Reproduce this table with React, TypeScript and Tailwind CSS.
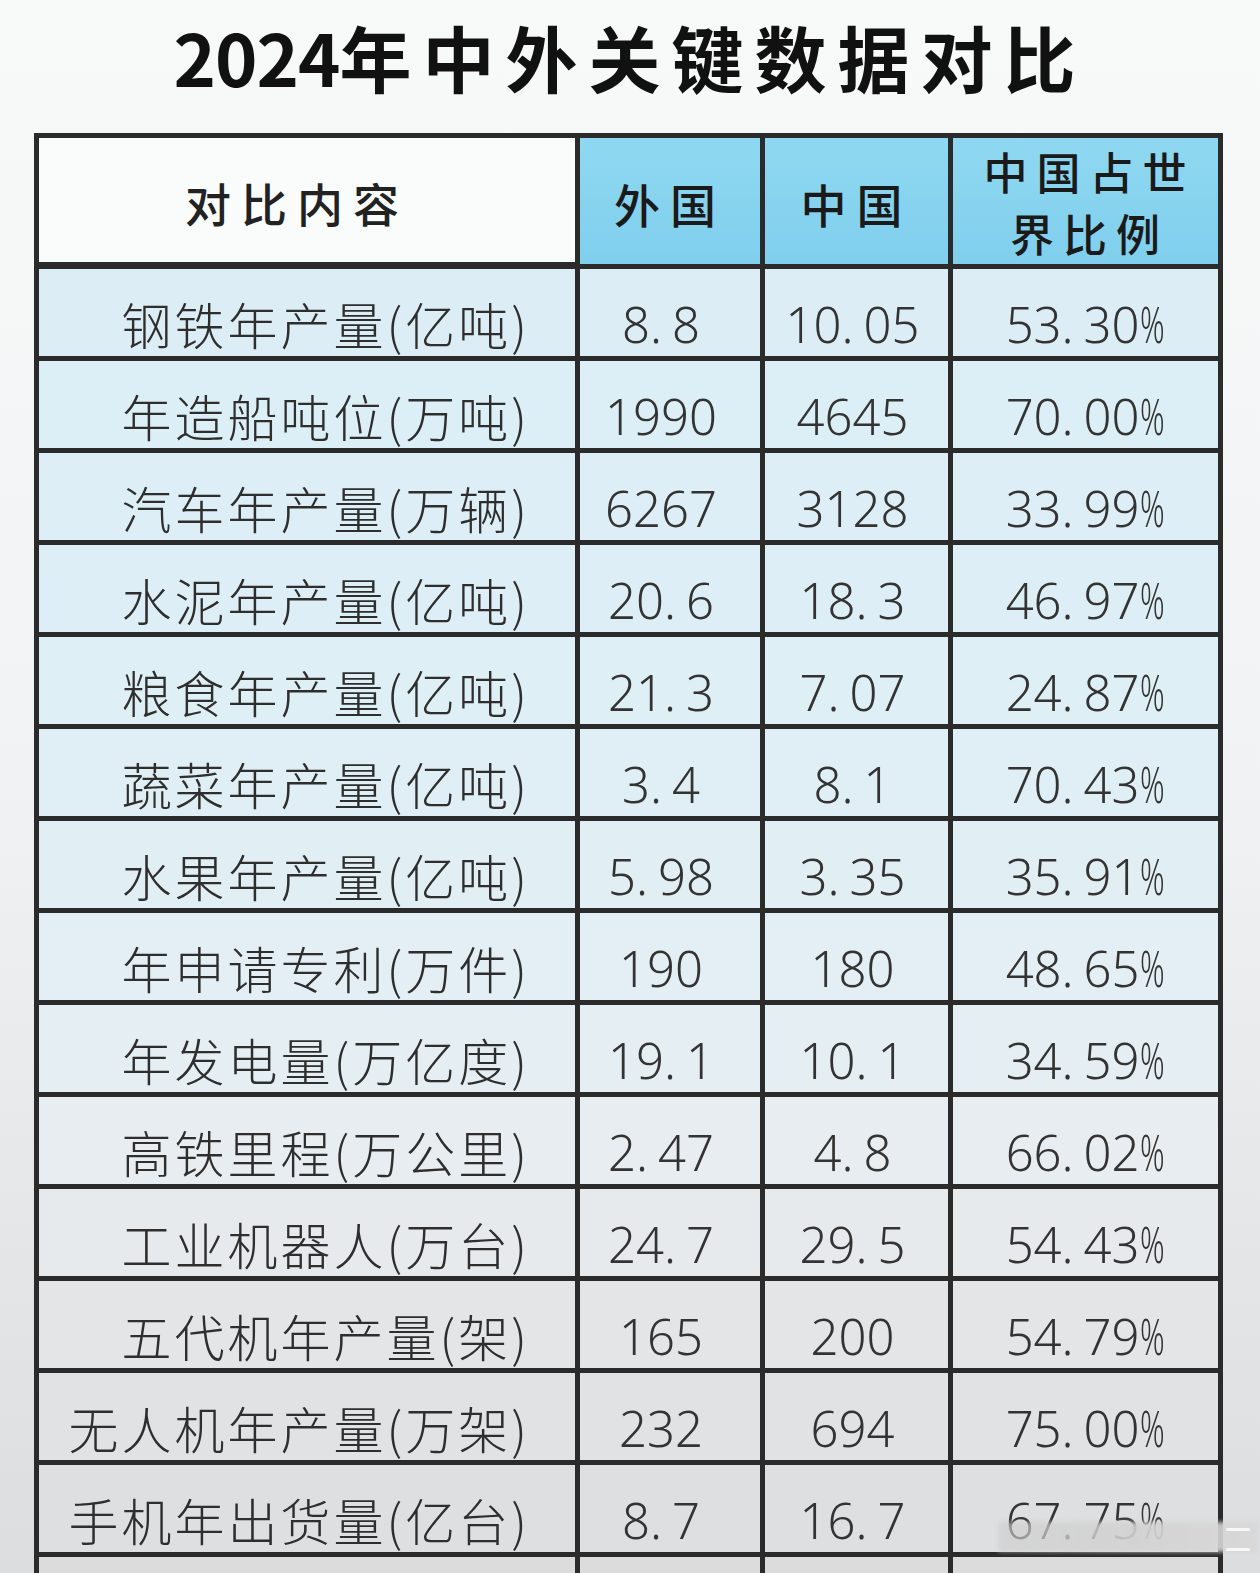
const rows = [
  { label: "钢铁年产量(亿吨)", foreign: "8.8", china: "10.05", share: "53.30", bg: "bg-[#dcedf6]" },
  { label: "年造船吨位(万吨)", foreign: "1990", china: "4645", share: "70.00", bg: "bg-[#dceef6]" },
  { label: "汽车年产量(万辆)", foreign: "6267", china: "3128", share: "33.99", bg: "bg-[#ddeef6]" },
  { label: "水泥年产量(亿吨)", foreign: "20.6", china: "18.3", share: "46.97", bg: "bg-[#deeef6]" },
  { label: "粮食年产量(亿吨)", foreign: "21.3", china: "7.07", share: "24.87", bg: "bg-[#dfeff6]" },
  { label: "蔬菜年产量(亿吨)", foreign: "3.4", china: "8.1", share: "70.43", bg: "bg-[#e0eff5]" },
  { label: "水果年产量(亿吨)", foreign: "5.98", china: "3.35", share: "35.91", bg: "bg-[#e1eff5]" },
  { label: "年申请专利(万件)", foreign: "190", china: "180", share: "48.65", bg: "bg-[#e3eff4]" },
  { label: "年发电量(万亿度)", foreign: "19.1", china: "10.1", share: "34.59", bg: "bg-[#e5eef3]" },
  { label: "高铁里程(万公里)", foreign: "2.47", china: "4.8", share: "66.02", bg: "bg-[#e7edf0]" },
  { label: "工业机器人(万台)", foreign: "24.7", china: "29.5", share: "54.43", bg: "bg-[#e7eaec]" },
  { label: "五代机年产量(架)", foreign: "165", china: "200", share: "54.79", bg: "bg-[#e4e5e7]" },
  { label: "无人机年产量(万架)", foreign: "232", china: "694", share: "75.00", bg: "bg-[#e1e2e3]" },
  { label: "手机年出货量(亿台)", foreign: "8.7", china: "16.7", share: "67.75", bg: "bg-[#dedfe0]" },
];

function Num({ value, percent }: { value: string; percent?: boolean }) {
  const [int, frac] = value.split(".");
  return (
    <span className="font-['Noto_Sans','Liberation_Sans',sans-serif] text-[49px] font-light leading-none text-[#333]">
      {int}
      {frac !== undefined && (
        <>
          <span className="inline-block w-[22px]">.</span>
          {frac}
        </>
      )}
      {percent && <span className="-mr-[14px] inline-block origin-left scale-x-[0.62]">%</span>}
    </span>
  );
}

export default function App() {
  return (
    <div className="relative h-[1573px] w-[1260px] overflow-hidden bg-linear-to-b from-[#f8f9f9] via-[#f1f2f3] to-[#dcdddf] font-['Noto_Sans_CJK_SC',sans-serif]">
      <div className="flex h-[133px] items-center justify-center pb-[22px]">
        <h1 className="text-[72px] font-bold leading-none tracking-[11px] text-[#111]">
          <span className="tracking-[-1px]">2024</span>年中外关键数据对比
        </h1>
      </div>

      <div className="ml-[34px] grid w-[1189px] grid-cols-[536px_180px_183px_265px] gap-[5px] bg-[#2b2b2b] p-[5px]">
        {/* header */}
        <div className="flex h-[124px] items-center justify-center bg-[#fafcfc] pt-[4px] pr-[20px]">
          <span className="text-[46px] font-medium tracking-[10px] text-[#222]">对比内容</span>
        </div>
        <div className="flex items-center justify-center bg-linear-to-b from-[#90d8f1] to-[#7fcfed] pt-[4px]">
          <span className="text-[46px] font-medium tracking-[10px] text-[#1a1a1a]">外国</span>
        </div>
        <div className="flex items-center justify-center bg-linear-to-b from-[#90d8f1] to-[#7fcfed] pt-[4px]">
          <span className="text-[46px] font-medium tracking-[10px] text-[#1a1a1a]">中国</span>
        </div>
        <div className="flex flex-col items-center justify-center bg-linear-to-b from-[#90d8f1] to-[#7fcfed] pt-[2px] pl-[8px] text-[44px] font-medium leading-[62px] tracking-[9px] text-[#1a1a1a]">
          <span>中国占世</span>
          <span>界比例</span>
        </div>

        {rows.map((r, i) => (
          <div key={r.label} className="contents">
            <div className={`flex h-[87px] items-end justify-end pr-[45px] pb-[8px] ${r.bg}`}>
              <span className="text-[50px] font-light leading-none tracking-[3px] text-[#2e2e2e]">{r.label}</span>
            </div>
            <div className={`flex items-end justify-center pr-[18px] pb-[7px] ${r.bg}`}>
              <Num value={r.foreign} />
            </div>
            <div className={`flex items-end justify-center pr-[8px] pb-[7px] ${r.bg}`}>
              <Num value={r.china} />
            </div>
            <div className={`relative flex items-end justify-center pb-[7px] ${r.bg}`}>
              <Num value={r.share} percent />
              {i === rows.length - 1 && (
                <div className="absolute bottom-0 left-[45px] -right-[40px] h-[30px] bg-linear-to-r from-[#cdcdcd]/60 via-[#d2d2d2]/90 to-[#d8d8d8]/90 blur-[2px]" />
              )}
            </div>
          </div>
        ))}

        {/* next row, cut off by the frame */}
        <div className="h-[87px] bg-[#dcdcdd]" />
        <div className="bg-[#dcdcdd]" />
        <div className="bg-[#dcdcdd]" />
        <div className="bg-[#dcdcdd]" />
      </div>

      <div className="absolute left-[1226px] top-[1528px] h-[3px] w-[24px] rounded-full bg-white/80" />
      <div className="absolute left-[1226px] top-[1548px] h-[3px] w-[24px] rounded-full bg-white/80" />
    </div>
  );
}
